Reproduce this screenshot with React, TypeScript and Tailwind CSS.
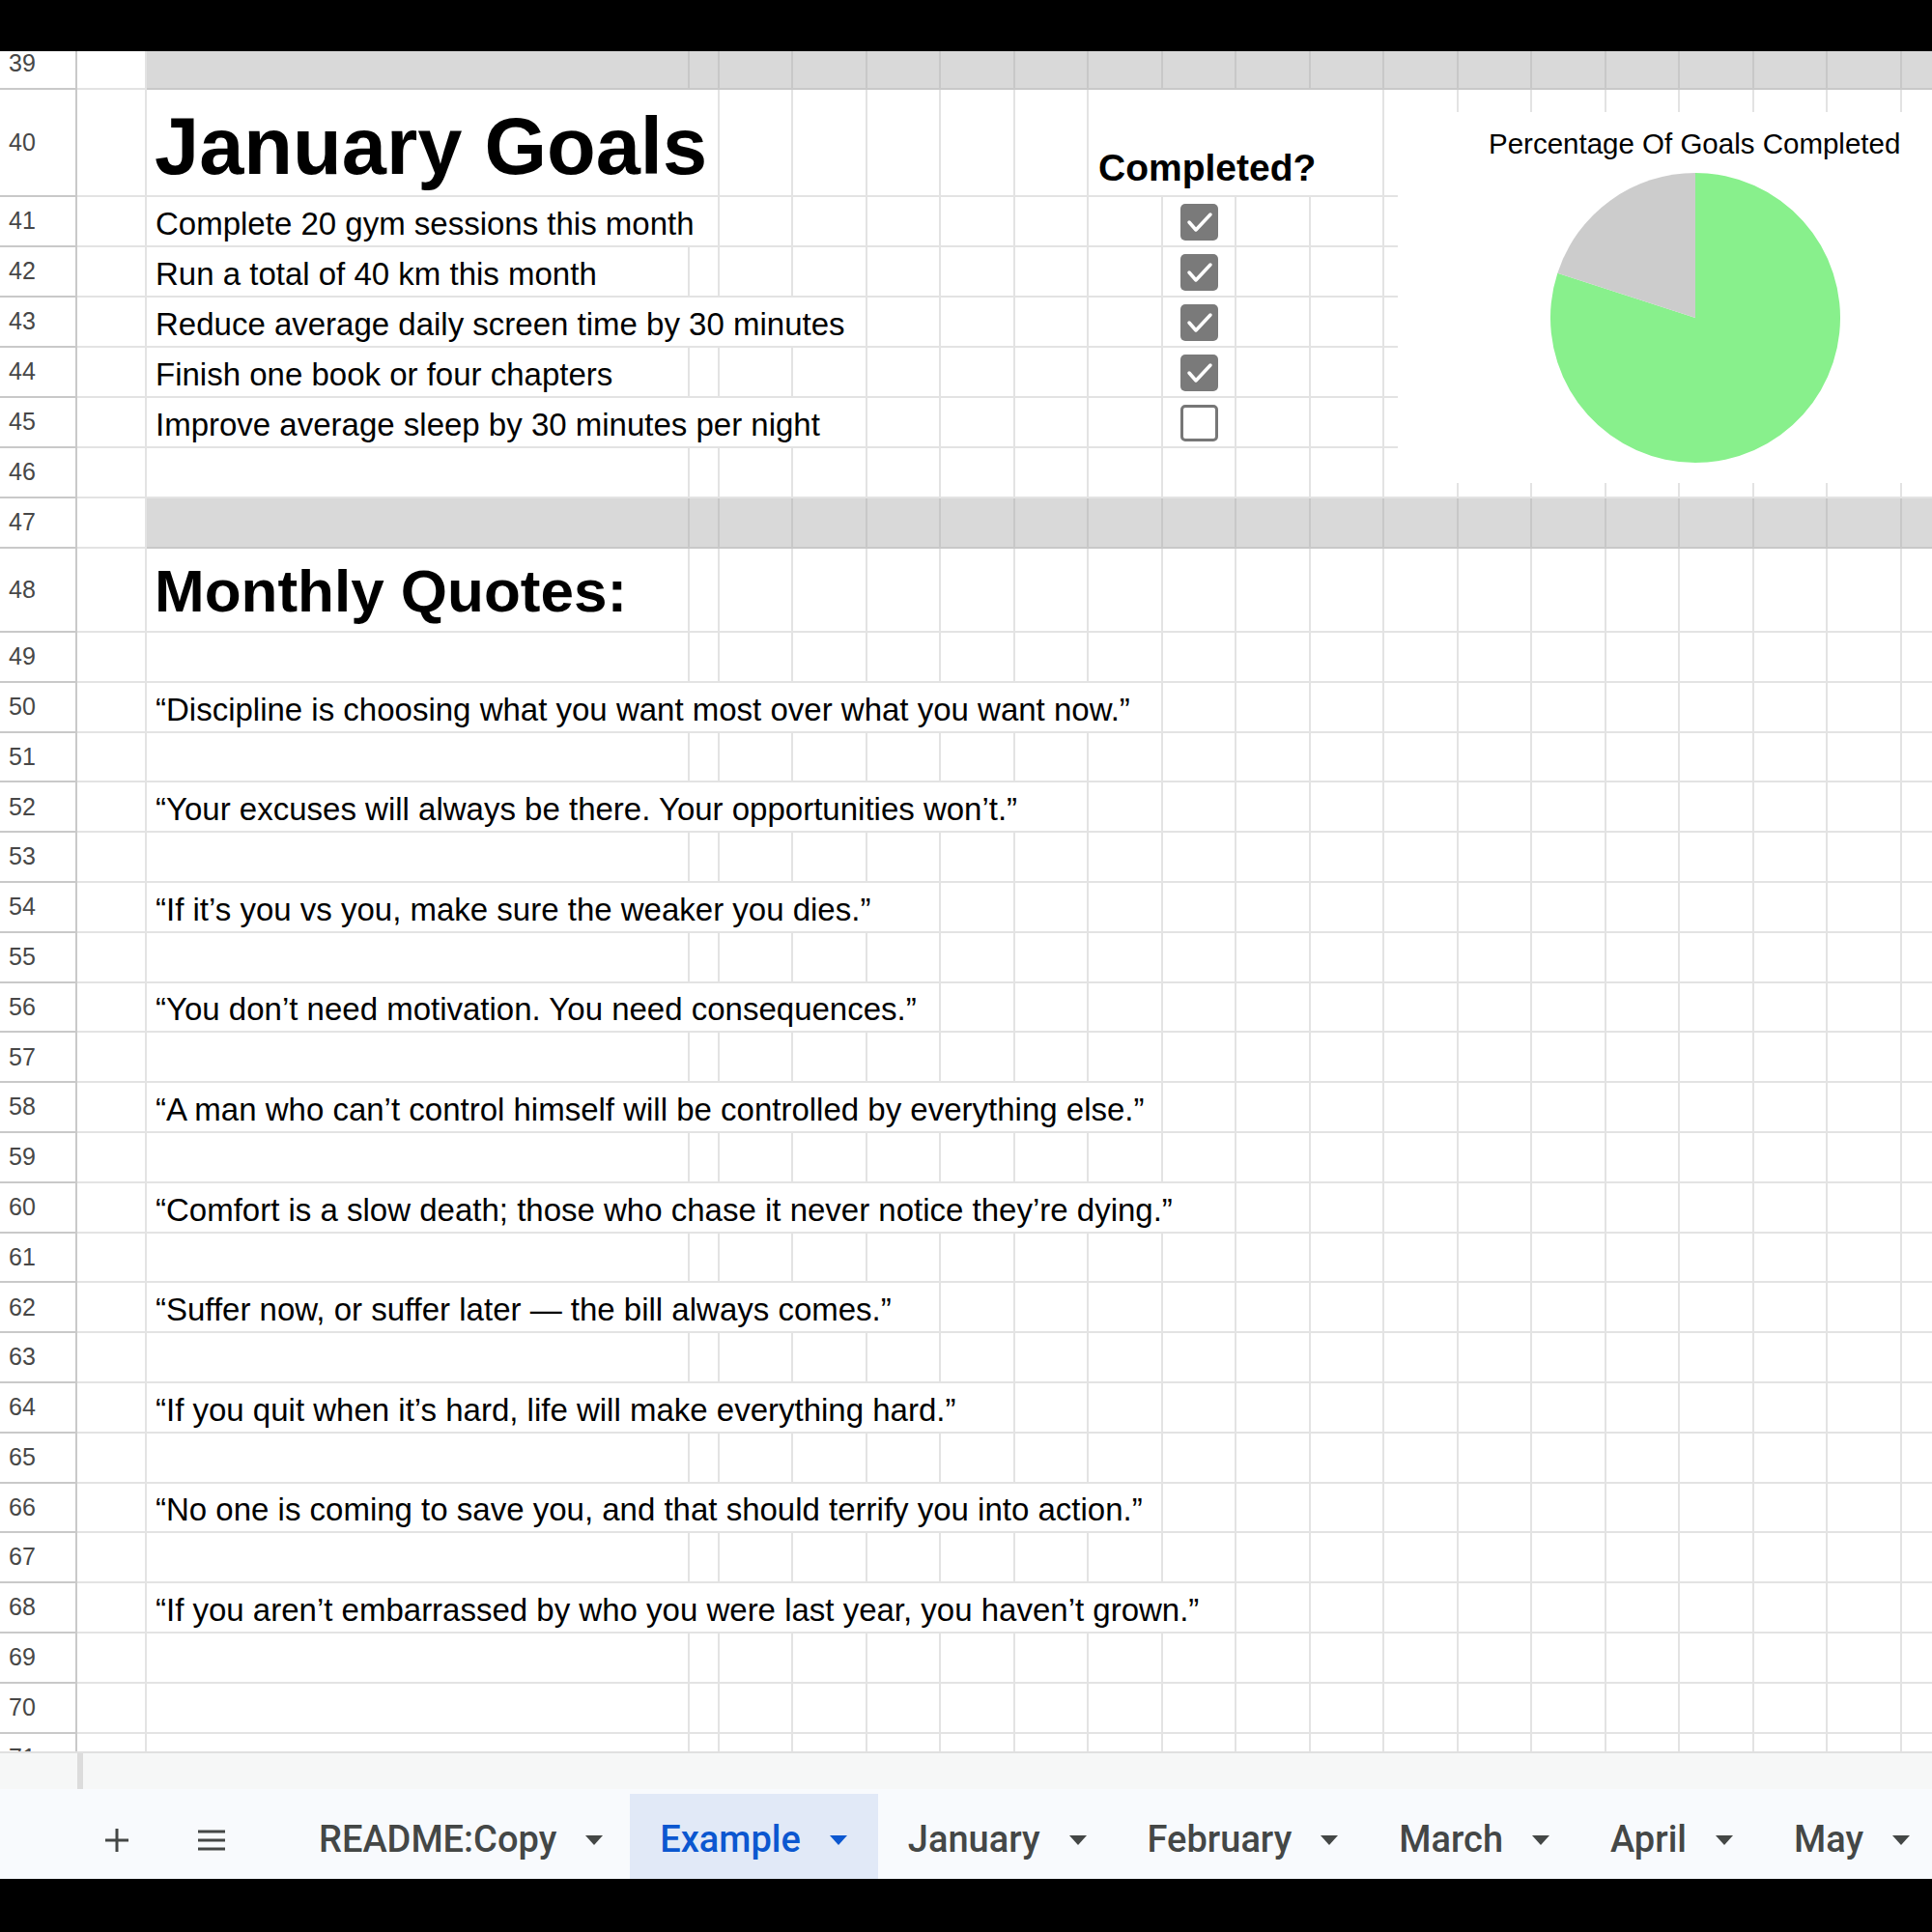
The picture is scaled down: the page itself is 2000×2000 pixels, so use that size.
import React from "react";

// column template shared by every row: row header, A, B, C, then the narrow columns
const TEMPLATE =
  "grid grid-cols-[80px_72px_562px_31px_76px_77px_76px_77px_76px_77px_76px_77px_76px_77px_76px_77px_76px_77px_76px_77px_76px]";

const SPAN: Record<number, string> = {
  1: "col-span-1",
  2: "col-span-2",
  3: "col-span-3",
  4: "col-span-4",
  5: "col-span-5",
  6: "col-span-6",
  7: "col-span-7",
  8: "col-span-8",
  9: "col-span-9",
};

const NCOLS = 20;

type Cell = { at: number; span: number; node?: React.ReactNode; cls?: string };

const Row = ({
  num,
  h,
  cells = [],
  band = false,
  first = false,
}: {
  num: number;
  h: string;
  cells?: Cell[];
  band?: boolean;
  first?: boolean;
}) => {
  const out: React.ReactNode[] = [];
  let c = 0;
  while (c < NCOLS) {
    const cell = cells.find((x) => x.at === c);
    const span = cell ? cell.span : 1;
    const gray = band && c > 0;
    out.push(
      <div
        key={c}
        className={`${SPAN[span]} flex min-w-0 border-r-2 border-b-2 ${
          gray ? "bg-[#d9d9d9] border-[#c8c8c8]" : "border-[#e3e3e3]"
        } ${cell?.cls ?? ""}`}
      >
        {cell?.node}
      </div>
    );
    c += span;
  }
  return (
    <div className={`${TEMPLATE} ${h} ${first ? "-mt-[12px]" : ""}`}>
      <div className="flex items-center border-r-2 border-b-2 border-[#c9c9c9] bg-white pl-[9px] text-[25px] text-[#474747]">
        {num}
      </div>
      {out}
    </div>
  );
};

const Checkbox = ({ checked }: { checked: boolean }) =>
  checked ? (
    <div className="w-[39px] h-[38px] mt-[2px] rounded-[5px] bg-[#7a7a7a] flex items-center justify-center">
      <svg width="39" height="38" viewBox="0 0 39 38">
        <polyline
          points="9,19 16,27 31,11"
          fill="none"
          stroke="white"
          strokeWidth="3.5"
          strokeLinecap="round"
          strokeLinejoin="round"
        />
      </svg>
    </div>
  ) : (
    <div className="w-[39px] h-[38px] mt-[2px] rounded-[5px] border-[3px] border-[#777] bg-white" />
  );

const goals = [
  { n: 41, text: "Complete 20 gym sessions this month", span: 2, done: true },
  { n: 42, text: "Run a total of 40 km this month", span: 1, done: true },
  { n: 43, text: "Reduce average daily screen time by 30 minutes", span: 4, done: true },
  { n: 44, text: "Finish one book or four chapters", span: 1, done: true },
  { n: 45, text: "Improve average sleep by 30 minutes per night", span: 4, done: false },
];

const quotes: Record<number, { text: string; span: number }> = {
  50: { text: "“Discipline is choosing what you want most over what you want now.”", span: 8 },
  52: { text: "“Your excuses will always be there. Your opportunities won’t.”", span: 7 },
  54: { text: "“If it’s you vs you, make sure the weaker you dies.”", span: 5 },
  56: { text: "“You don’t need motivation. You need consequences.”", span: 5 },
  58: { text: "“A man who can’t control himself will be controlled by everything else.”", span: 8 },
  60: { text: "“Comfort is a slow death; those who chase it never notice they’re dying.”", span: 9 },
  62: { text: "“Suffer now, or suffer later — the bill always comes.”", span: 5 },
  64: { text: "“If you quit when it’s hard, life will make everything hard.”", span: 6 },
  66: { text: "“No one is coming to save you, and that should terrify you into action.”", span: 8 },
  68: { text: "“If you aren’t embarrassed by who you were last year, you haven’t grown.”", span: 9 },
};

const bodyText = "items-end pb-[6px] pl-[9px] text-[33px] leading-none text-black whitespace-nowrap";

const Caret = ({ color }: { color: string }) => (
  <svg width="18" height="10" viewBox="0 0 18 10">
    <polygon points="0,0 18,0 9,10" fill={color} />
  </svg>
);

const tabs = ["README:Copy", "Example", "January", "February", "March", "April", "May"];

export default function App() {
  const pieR = 150;
  const a = (72 * Math.PI) / 180;
  const ex = 150 - pieR * Math.sin(a);
  const ey = 150 - pieR * Math.cos(a);

  const lower: number[] = [];
  for (let i = 49; i <= 71; i++) lower.push(i);

  return (
    <div className="relative w-[2000px] h-[2000px] overflow-hidden bg-black font-['Liberation_Sans',Arial,sans-serif]">
      <div className="h-[53px] bg-black" />

      {/* sheet grid */}
      <div className="h-[1760px] overflow-hidden bg-white">
        <Row num={39} h="h-[52px]" band first />
        <Row
          num={40}
          h="h-[111px]"
          cells={[
            {
              at: 1,
              span: 2,
              cls: "items-end pb-[9px] pl-[8px] text-[83px] leading-none font-bold text-black whitespace-nowrap",
              node: "January Goals",
            },
            {
              at: 8,
              span: 4,
              cls: "items-end pb-[9px] pl-[10px] text-[39px] leading-none font-bold text-black whitespace-nowrap",
              node: "Completed?",
            },
          ]}
        />
        {goals.map((g) => (
          <Row
            key={g.n}
            num={g.n}
            h="h-[52px]"
            cells={[
              { at: 1, span: g.span, cls: bodyText, node: g.text },
              { at: 9, span: 1, cls: "items-center justify-center", node: <Checkbox checked={g.done} /> },
            ]}
          />
        ))}
        <Row num={46} h="h-[52px]" />
        <Row num={47} h="h-[52px]" band />
        <Row
          num={48}
          h="h-[87px]"
          cells={[
            {
              at: 1,
              span: 1,
              cls: "items-end pb-[10px] pl-[8px] text-[62px] leading-none font-bold text-black whitespace-nowrap",
              node: "Monthly Quotes:",
            },
          ]}
        />
        {lower.map((n) => (
          <Row
            key={n}
            num={n}
            h="h-[51.8px]"
            cells={quotes[n] ? [{ at: 1, span: quotes[n].span, cls: bodyText, node: quotes[n].text }] : []}
          />
        ))}
      </div>

      {/* scroll strip */}
      <div className="h-[39px] border-t-2 border-[#e0e0e0] bg-[#f6f7f7] pl-[80px]">
        <div className="w-[6px] h-full bg-[#dcdcdc]" />
      </div>

      {/* sheet tabs */}
      <div className="h-[93px] bg-[#f8fafd] pt-[5px] flex items-stretch font-['Roboto',sans-serif] text-[38px] font-medium text-[#444746]">
        <div className="flex items-center pl-[97px] pt-[7px]">
          <div className="w-[48px] flex justify-center">
            <svg width="26" height="26" viewBox="0 0 26 26">
              <path d="M13 1v24M1 13h24" stroke="#444746" strokeWidth="3" />
            </svg>
          </div>
          <div className="w-[48px] ml-[50px] flex justify-center">
            <svg width="28" height="22" viewBox="0 0 28 22">
              <path d="M0 2h28M0 11h28M0 20h28" stroke="#444746" strokeWidth="3.2" />
            </svg>
          </div>
        </div>
        <div className="flex ml-[56px]">
          {tabs.map((t, i) => {
            const active = t === "Example";
            return (
              <div
                key={t}
                className={`flex items-center gap-[30px] pl-[31px] pt-[7px] ${i === 0 ? "pr-[28px]" : "pr-[32px]"} ${
                  active ? "bg-[#e1e9f7] text-[#0b57d0]" : ""
                }`}
              >
                <span>{t}</span>
                <Caret color={active ? "#0b57d0" : "#444746"} />
              </div>
            );
          })}
        </div>
      </div>

      <div className="h-[55px] bg-black" />

      {/* chart object over the grid */}
      <div className="absolute top-[116px] left-[1447px] w-[560px] h-[384px] bg-white">
        <div className="pt-[18px] pl-[94px] text-[29.5px] leading-none text-black whitespace-nowrap">
          Percentage Of Goals Completed
        </div>
        <svg className="ml-[158px] mt-[15px]" width="300" height="300" viewBox="0 0 300 300">
          <path d={`M150 150 L150 0 A150 150 0 1 1 ${ex} ${ey} Z`} fill="#88f08c" />
          <path d={`M150 150 L150 0 A150 150 0 0 0 ${ex} ${ey} Z`} fill="#cccccc" />
        </svg>
      </div>
    </div>
  );
}
